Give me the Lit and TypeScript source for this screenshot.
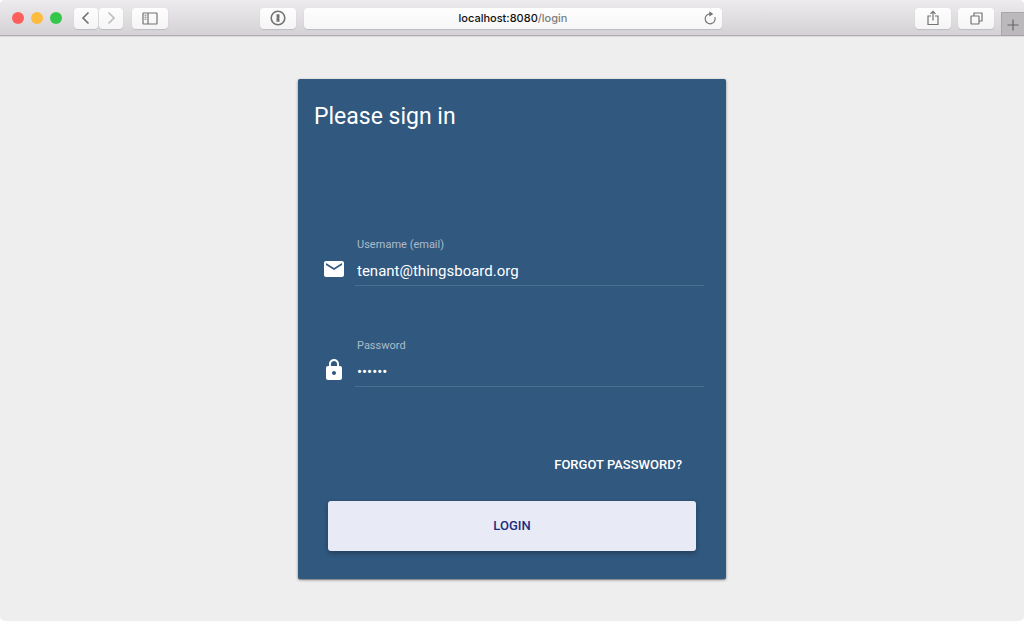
import { LitElement, html, css, svg } from "lit";
import { customElement, state } from "lit/decorators.js";

@customElement("browser-toolbar")
class BrowserToolbar extends LitElement {
  static styles = css`
    :host {
      display: block;
      font-family: Inter, "Liberation Sans", sans-serif;
    }
    .bar {
      display: grid;
      grid-template-columns: 1fr minmax(0, 418px) 1fr;
      box-sizing: border-box;
      height: 37px;
      padding-left: 2px;
      border-bottom: 1px solid #dcdbdc;
      box-shadow: inset 0 -1px #b0adb1;
      background: linear-gradient(#edebed, #d3d1d4);
      border-radius: 5px 5px 0 0;
      overflow: hidden;
    }
    .side {
      display: flex;
      align-items: center;
    }
    .left {
      padding: 0 8px 0 10px;
    }
    .lights {
      display: flex;
      gap: 7px;
      margin-right: 12px;
    }
    .light {
      width: 12px;
      height: 12px;
      border-radius: 50%;
    }
    .close { background: #fc605c; }
    .minimise { background: #fdbc40; }
    .zoom { background: #34c84a; }
    .nav {
      display: flex;
      gap: 1px;
      margin-right: 9px;
    }
    button {
      display: flex;
      align-items: center;
      justify-content: center;
      box-sizing: border-box;
      width: 36px;
      height: 21px;
      padding: 0;
      border: 0;
      border-radius: 4px;
      background: linear-gradient(#fefefe, #f4f4f4);
      box-shadow: 0 1px 1px #bebcbf;
      color: #737373;
    }
    .nav button {
      width: 24px;
    }
    button:disabled {
      color: #bdbdbd;
    }
    .push {
      margin-left: auto;
    }
    .address {
      position: relative;
      align-self: center;
      display: flex;
      align-items: center;
      height: 21px;
      border-radius: 4px;
      background: linear-gradient(#fefefe, #f6f6f6);
      box-shadow: 0 1px 1px #bebcbf;
      font-size: 11px;
      line-height: 16px;
      font-weight: 500;
      color: #7d7d7d;
    }
    .url {
      flex: 1;
      text-align: center;
    }
    .host {
      color: #111;
    }
    .address button {
      position: absolute;
      right: 0;
      width: 24px;
      background: none;
      box-shadow: none;
    }
    .right {
      justify-content: flex-end;
      gap: 7px;
    }
    .right .newtab {
      align-self: flex-end;
      width: 23px;
      height: 24px;
      border: 1px solid #a9a7aa;
      border-width: 1px 0 0 1px;
      border-radius: 0;
      background: #bbb9bc;
      box-shadow: inset 0 -1px #a3a1a4;
      color: #666;
    }
    svg {
      display: block;
      fill: none;
      stroke: currentColor;
    }
    .solid {
      fill: currentColor;
      stroke: none;
    }
  `;

  render() {
    return html`
      <header class="bar">
        <div class="side left">
          <div class="lights">
            <span class="light close"></span>
            <span class="light minimise"></span>
            <span class="light zoom"></span>
          </div>
          <div class="nav">
            <button aria-label="Back">
              <svg width="12" height="14" viewBox="0 0 12 14" stroke-width="1.7"><path d="M8.5 1.5 3 7l5.500 5.500" /></svg>
            </button>
            <button aria-label="Forward" disabled>
              <svg width="12" height="14" viewBox="0 0 12 14" stroke-width="1.7"><path d="M3.500 1.500 9 7l-5.500 5.500" /></svg>
            </button>
          </div>
          <button aria-label="Show sidebar">
            <svg width="16" height="13" viewBox="0 0 16 13">
              <rect x="1" y="1" width="14" height="11" rx=".5" stroke-width="1.200" />
              <path d="M6 1v11" stroke-width="1.200" />
              <path d="M2.500 3.200h2M2.500 5.200h2M2.500 7.200h2" stroke-width=".9" />
            </svg>
          </button>
          <button class="push" aria-label="Password manager">
            <svg width="16" height="16" viewBox="0 0 16 16">
              <circle cx="8" cy="8" r="6.800" stroke-width="1.600" />
              <path class="solid" d="M6.500 4.200h3v3.600l-.5.500.5.500v3h-3V8.200l.5-.5-.5-.5z" />
            </svg>
          </button>
        </div>
        <div class="address">
          <div class="url"><span class="host">localhost:8080</span>/login</div>
          <button aria-label="Reload">
            <svg width="14" height="14" viewBox="0 0 14 14">
              <path d="M11.900 6.200A5 5 0 1 1 7.300 2.800" stroke-width="1.200" />
              <path class="solid" d="M6.300.3 10.300 2.900 6.300 5.500z" />
            </svg>
          </button>
        </div>
        <div class="side right">
          <button aria-label="Share">
            <svg width="12" height="16" viewBox="0 0 12 16" stroke-width="1.200">
              <path d="M4 6H1v8.500h10V6H8M6 10.500V1.500M3.500 3.900 6 1.400l2.500 2.500" />
            </svg>
          </button>
          <button aria-label="Show all tabs">
            <svg width="13" height="13" viewBox="0 0 13 13" stroke-width="1.200">
              <rect x="1" y="4" width="8" height="8" rx=".5" />
              <path d="M4 4V1h8v8H9" />
            </svg>
          </button>
          <button class="newtab" aria-label="New tab">
            <svg width="12" height="12" viewBox="0 0 12 12" stroke-width="1.200"><path d="M6 .5v11M.5 6h11" /></svg>
          </button>
        </div>
      </header>
    `;
  }
}

const mailIcon = svg`<path d="M20 4H4c-1.100 0-1.990.9-1.990 2L2 18c0 1.100.9 2 2 2h16c1.100 0 2-.9 2-2V6c0-1.100-.9-2-2-2zm0 4l-8 5-8-5V6l8 5 8-5v2z" />`;
const lockIcon = svg`<path d="M18 8h-1V6c0-2.760-2.240-5-5-5S7 3.240 7 6v2H6c-1.100 0-2 .9-2 2v10c0 1.100.9 2 2 2h12c1.100 0 2-.9 2-2V10c0-1.100-.9-2-2-2zm-6 9c-1.100 0-2-.9-2-2s.9-2 2-2 2 .9 2 2-.9 2-2 2zm3.100-9H8.900V6c0-1.710 1.390-3.100 3.100-3.100 1.710 0 3.100 1.390 3.100 3.100v2z" />`;

@customElement("login-card")
class LoginCard extends LitElement {
  @state() username = "tenant@thingsboard.org";
  @state() password = "tenant";

  static styles = css`
    :host {
      display: block;
      width: 100%;
      max-width: 428px;
    }
    .card {
      box-sizing: border-box;
      padding: 20px 16px 28px;
      border-radius: 2px;
      background: #31587f;
      box-shadow: 0 1px 3px rgba(0, 0, 0, 0.4), 0 1px 1px rgba(0, 0, 0, 0.2);
      color: #fff;
      font-family: Roboto, sans-serif;
    }
    h1 {
      margin: 0 0 102px;
      font-size: 23px;
      line-height: 36px;
      font-weight: 400;
    }
    .field {
      display: grid;
      grid-template-columns: 24px 1fr;
      column-gap: 9px;
      margin: 0 6px 52px 8px;
    }
    label {
      grid-column: 2;
      height: 20px;
      padding-left: 2px;
      font-size: 11px;
      line-height: 16px;
      color: rgba(255, 255, 255, 0.6);
    }
    svg {
      width: 24px;
      height: 24px;
      fill: currentColor;
    }
    input {
      box-sizing: border-box;
      width: 100%;
      height: 29px;
      padding: 0 2px;
      border: 0;
      border-bottom: 1px solid #4c6e92;
      border-radius: 0;
      outline: 0;
      background: none;
      color: #fff;
      font-family: inherit;
      font-size: 15px;
      line-height: 20px;
    }
    .actions {
      display: flex;
      flex-direction: column;
      margin: 60px 14px 0;
      gap: 18px;
    }
    button {
      border: 0;
      border-radius: 3px;
      background: none;
      color: inherit;
      font-family: inherit;
      font-size: 13px;
      font-weight: 500;
      line-height: 20px;
      text-transform: uppercase;
    }
    .forgot {
      align-self: flex-end;
      padding: 8px 14px;
    }
    .login {
      padding: 15px 8px;
      background: #e8eaf6;
      box-shadow: 0 2px 5px rgba(0, 0, 0, 0.3);
      color: #1f2c80;
    }
  `;

  render() {
    return html`
      <form class="card" @submit=${(e: Event) => e.preventDefault()}>
        <h1>Please sign in</h1>
        <div class="field">
          <label for="username">Username (email)</label>
          <svg viewBox="0 0 24 24" aria-hidden="true">${mailIcon}</svg>
          <input id="username" type="email" .value=${this.username}
            @input=${(e: Event) => (this.username = (e.target as HTMLInputElement).value)} />
        </div>
        <div class="field">
          <label for="password">Password</label>
          <svg viewBox="0 0 24 24" aria-hidden="true">${lockIcon}</svg>
          <input id="password" type="password" .value=${this.password}
            @input=${(e: Event) => (this.password = (e.target as HTMLInputElement).value)} />
        </div>
        <div class="actions">
          <button class="forgot" type="button">Forgot password?</button>
          <button class="login" type="submit">Login</button>
        </div>
      </form>
    `;
  }
}

@customElement("app-root")
class AppRoot extends LitElement {
  static styles = css`
    :host {
      display: block;
      background: #fff;
    }
    .window {
      display: flex;
      flex-direction: column;
      min-height: 100vh;
      border-radius: 5px;
      background: #eeeeee;
    }
    main {
      flex: 1;
      display: flex;
      align-items: center;
      justify-content: center;
    }
  `;

  render() {
    return html`
      <div class="window">
        <browser-toolbar></browser-toolbar>
        <main><login-card></login-card></main>
      </div>
    `;
  }
}
